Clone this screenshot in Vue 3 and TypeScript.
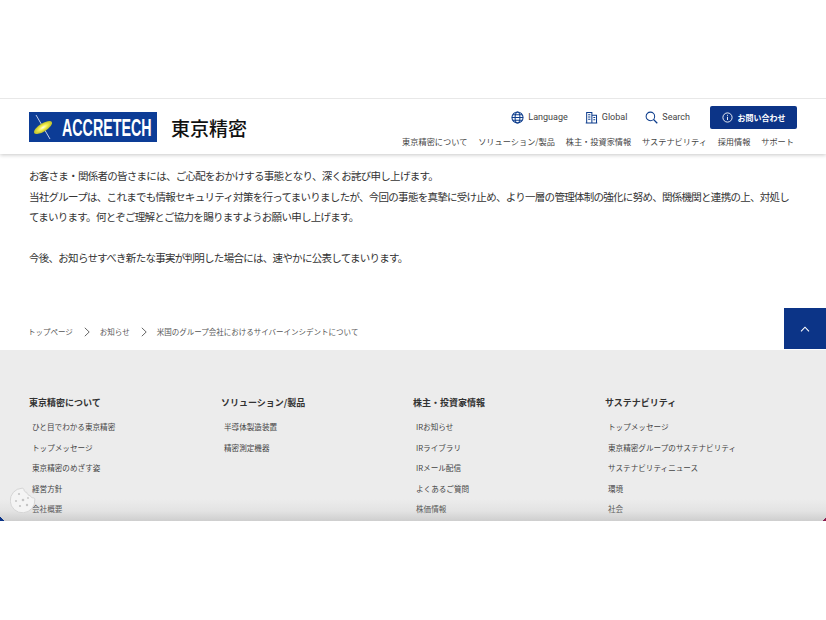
<script setup lang="ts">
const utilLinks = [
  { label: 'Language', icon: 'globe' },
  { label: 'Global', icon: 'building' },
  { label: 'Search', icon: 'search' },
]

const navLinks = ['東京精密について', 'ソリューション/製品', '株主・投資家情報', 'サステナビリティ', '採用情報', 'サポート']

const crumbs = ['トップページ', 'お知らせ', '米国のグループ会社におけるサイバーインシデントについて']

const footerCols = [
  { title: '東京精密について', links: ['ひと目でわかる東京精密', 'トップメッセージ', '東京精密のめざす姿', '経営方針', '会社概要'] },
  { title: 'ソリューション/製品', links: ['半導体製造装置', '精密測定機器'] },
  { title: '株主・投資家情報', links: ['IRお知らせ', 'IRライブラリ', 'IRメール配信', 'よくあるご質問', '株価情報'] },
  { title: 'サステナビリティ', links: ['トップメッセージ', '東京精密グループのサステナビリティ', 'サステナビリティニュース', '環境', '社会'] },
]
</script>

<template>
  <div class="page">
    <div class="frame">
      <header class="header">
        <div class="brand">
          <svg class="logo" viewBox="0 0 128 30" width="128" height="30">
            <defs>
              <radialGradient id="flare" cx="50%" cy="50%" r="50%">
                <stop offset="0%" stop-color="#fffef0" />
                <stop offset="45%" stop-color="#f6f04a" />
                <stop offset="100%" stop-color="#b8bc30" />
              </radialGradient>
            </defs>
            <rect width="128" height="30" fill="#0c3c96" />
            <path d="M7 3 L21 27" stroke="#c3cfea" stroke-width="1" />
            <ellipse cx="14" cy="15.500" rx="10.500" ry="4" transform="rotate(-32 14 15.500)" fill="url(#flare)" />
            <text class="logo-text" transform="translate(33 24) scale(.68 1.14)">ACCRETECH</text>
          </svg>
          <span class="brand-name">東京精密</span>
        </div>
        <div class="header-right">
          <div class="util">
            <a v-for="u in utilLinks" :key="u.label" class="util-link">
              <svg width="13" height="13" viewBox="0 0 14 14" fill="none" stroke="#0c3c8c" stroke-width="1.100">
                <template v-if="u.icon === 'globe'">
                  <circle cx="7" cy="7" r="6" />
                  <ellipse cx="7" cy="7" rx="2.600" ry="6" />
                  <path d="M1 7h12M2 4h10M2 10h10" />
                </template>
                <template v-else-if="u.icon === 'building'">
                  <path d="M1.800 12.800V1.500h5.600v11.300M7.400 4.500h5v8.300M.8 12.800h12.400" />
                  <path d="M3.400 4h2.400M3.400 6.500h2.400M3.400 9h2.400M9 7h2M9 9.500h2" />
                </template>
                <template v-else>
                  <circle cx="5.800" cy="5.800" r="4.600" />
                  <path d="M9.200 9.200l4 4" stroke-width="1.300" />
                </template>
              </svg>
              <span>{{ u.label }}</span>
            </a>
            <a class="contact">
              <svg width="11" height="11" viewBox="0 0 11 11" fill="none" stroke="#fff" stroke-width=".9">
                <circle cx="5.500" cy="5.500" r="4.600" />
                <path d="M5.500 4.800v3.200M5.500 2.800v1" />
              </svg>
              <span>お問い合わせ</span>
            </a>
          </div>
          <nav class="nav">
            <a v-for="n in navLinks" :key="n">{{ n }}</a>
          </nav>
        </div>
      </header>

      <main class="article">
        <p>お客さま・関係者の皆さまには、ご心配をおかけする事態となり、深くお詫び申し上げます。</p>
        <p>当社グループは、これまでも情報セキュリティ対策を行ってまいりましたが、今回の事態を真摯に受け止め、より一層の管理体制の強化に努め、関係機関と連携の上、対処してまいります。何とぞご理解とご協力を賜りますようお願い申し上げます。</p>
        <p class="gap">今後、お知らせすべき新たな事実が判明した場合には、速やかに公表してまいります。</p>
      </main>

      <div class="crumb-row">
        <ol class="crumbs">
          <li v-for="(c, i) in crumbs" :key="c">
            <svg v-if="i > 0" class="chev" width="6" height="10" viewBox="0 0 6 10" fill="none" stroke="#555" stroke-width=".9">
              <path d="M.8.8 5.200 5 .8 9.200" />
            </svg>
            <span>{{ c }}</span>
          </li>
        </ol>
        <a class="to-top">
          <svg width="10" height="6" viewBox="0 0 10 6" fill="none" stroke="#fff" stroke-width="1.100">
            <path d="M1 5.300 5 1.200l4 4.100" />
          </svg>
        </a>
      </div>

      <footer class="footer">
        <div v-for="col in footerCols" :key="col.title" class="col">
          <h3>{{ col.title }}</h3>
          <ul>
            <li v-for="l in col.links" :key="l">{{ l }}</li>
          </ul>
        </div>
      </footer>

      <div class="fade"></div>
      <svg class="cookie" width="26" height="26" viewBox="0 0 26 26">
        <path d="M12 1.200c1.200 0 1.800.4 2 1.600.3 1.600 1.300 2.500 2.800 2.600.4 1.900 1.500 3 3.400 3.200.4 1.400 1.500 2.200 3.200 2.300.8.100 1.400.4 1.400 1.600A12.300 12.300 0 1 1 12 1.200z" fill="#f4f4f4" stroke="#d5d5d5" stroke-width="1" />
        <g fill="#c4c4c4">
          <circle cx="9" cy="7" r="1.100" />
          <circle cx="6" cy="14" r="1" />
          <circle cx="13" cy="13" r="1.300" />
          <circle cx="18" cy="11" r=".9" />
          <circle cx="10" cy="19" r="1.100" />
          <circle cx="17" cy="18" r="1.200" />
        </g>
      </svg>
      <i class="corner corner-l"></i>
      <i class="corner corner-r"></i>
    </div>
  </div>
</template>

<style scoped>
.page {
  width: 826px;
  height: 620px;
  padding-top: 98px;
  box-sizing: border-box;
  background: #fff;
  font-family: "Noto Sans CJK JP", "Noto Sans", sans-serif;
  color: #333;
}

.frame {
  position: relative;
  height: 423px;
  overflow: hidden;
  background: #fff;
}

.header {
  position: relative;
  z-index: 1;
  height: 56px;
  box-sizing: border-box;
  padding: 0 32px 0 29px;
  display: flex;
  justify-content: space-between;
  border-top: 1px solid #e8e8e8;
  background: #fff;
  box-shadow: 0 1px 4px rgba(0, 0, 0, .22);
}

.brand {
  display: flex;
  align-items: center;
  gap: 14px;
  height: 55px;
  padding-top: 1px;
  box-sizing: border-box;
}

.logo { display: block; }

.logo-text {
  font-family: "Liberation Sans", sans-serif;
  font-weight: 700;
  font-size: 21px;
  fill: #fff;
}

.brand-name {
  font-size: 19px;
  font-weight: 500;
  color: #111;
}

.header-right {
  display: flex;
  flex-direction: column;
  align-items: flex-end;
}

.util {
  display: flex;
  align-items: center;
  margin-top: 6px;
  margin-right: -3px;
  height: 24px;
}

.util-link {
  display: flex;
  align-items: center;
  gap: 4px;
  margin-right: 18px;
  font-family: "Roboto", sans-serif;
  font-size: 9px;
  color: #444;
}

.util-link:first-child { margin-right: 17px; }

.contact {
  display: flex;
  align-items: center;
  justify-content: center;
  gap: 5px;
  width: 87px;
  height: 23px;
  margin-left: 2px;
  border-radius: 2px;
  background: #0c3487;
  color: #fff;
  font-size: 8px;
  font-weight: 700;
}

.nav {
  display: flex;
  gap: 10.800px;
  margin-top: 6px;
  font-size: 8.200px;
  line-height: 13px;
  color: #444;
}

.article {
  padding: 12px 32px 0 29px;
  height: 154px;
  box-sizing: border-box;
  font-size: 10.500px;
  line-height: 20.500px;
  letter-spacing: -.72px;
  color: #333;
}

.article p { margin: 0; }

.article .gap { margin-top: 20.500px; }

.crumb-row {
  position: relative;
  height: 42px;
}

.crumbs {
  list-style: none;
  margin: 0;
  padding: 18px 0 0 28px;
  display: flex;
  font-size: 7.500px;
  line-height: 12px;
  color: #555;
}

.crumbs li {
  display: flex;
  align-items: center;
}

.chev { margin: 0 10px 0 11px; }

.to-top {
  position: absolute;
  right: 0;
  top: 0;
  width: 42px;
  height: 41px;
  display: flex;
  align-items: center;
  justify-content: center;
  background: #0c3487;
}

.footer {
  height: 171px;
  box-sizing: border-box;
  background: #ececec;
  padding: 46px 0 0 29px;
  display: flex;
}

.col { width: 192px; }

.col h3 {
  margin: 0;
  font-size: 9px;
  line-height: 13px;
  font-weight: 700;
  color: #333;
}

.col ul {
  list-style: none;
  margin: 12px 0 0;
  padding: 0 0 0 3px;
  font-size: 7.600px;
  line-height: 12px;
  color: #444;
}

.col li { margin-bottom: 8.500px; white-space: nowrap; }

.fade {
  position: absolute;
  left: 0;
  right: 0;
  bottom: 0;
  height: 22px;
  background: linear-gradient(rgba(190, 190, 190, 0), rgba(190, 190, 190, .2) 55%, rgba(190, 190, 190, .65));
}

.cookie {
  position: absolute;
  left: 10px;
  bottom: 8px;
}

.corner {
  position: absolute;
  bottom: 0;
  width: 4px;
  height: 4px;
}

.corner-l {
  left: 0;
  background: linear-gradient(45deg, #0c3487 50%, transparent 50%);
}

.corner-r {
  right: 0;
  background: linear-gradient(-45deg, #8c1c4e 50%, transparent 50%);
}
</style>
